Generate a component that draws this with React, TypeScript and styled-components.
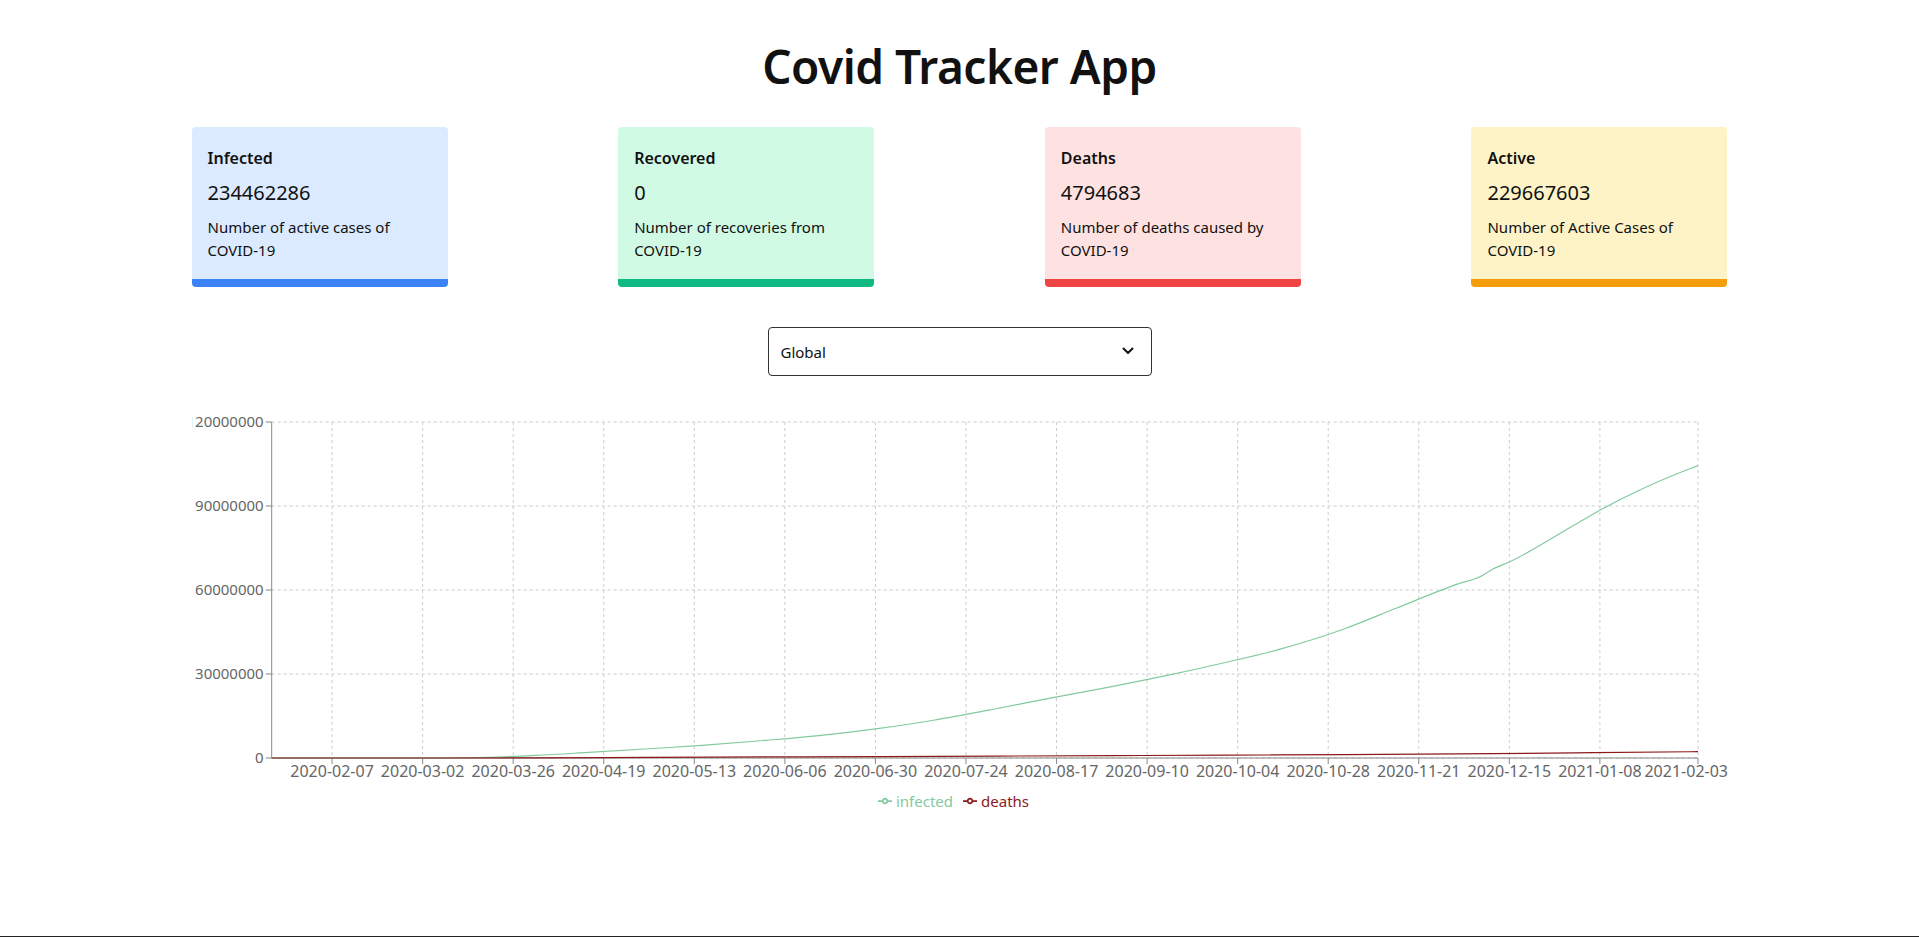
import React from "react"
import styled, { createGlobalStyle } from "styled-components"

const GlobalStyle = createGlobalStyle`
  body {
    margin: 0;
    background: #fff;
    font-family: "Segoe UI", "Noto Sans", sans-serif;
    color: #111;
  }
`

const Page = styled.div`
  max-width: 1536px;
  margin: 0 auto;
  display: flex;
  flex-direction: column;
  align-items: center;
`

const Heading = styled.h1`
  font-size: 46px;
  line-height: 48px;
  font-weight: 600;
  letter-spacing: -0.5px;
  margin: 42px 0 37px;
`

const CardRow = styled.div`
  width: 100%;
  display: flex;
  justify-content: space-between;
`

const Card = styled.div<{ $bg: string; $accent: string }>`
  width: 256px;
  box-sizing: border-box;
  padding: 16px 16px 17px;
  background: ${p => p.$bg};
  border-bottom: 8px solid ${p => p.$accent};
  border-radius: 4px;
`

const CardTitle = styled.div`
  font-size: 16px;
  line-height: 24px;
  font-weight: 600;
  margin: 3px 0 9px;
`

const CardValue = styled.div`
  font-size: 20px;
  line-height: 28px;
  margin-bottom: 9px;
`

const CardText = styled.div`
  font-size: 15px;
  line-height: 23px;
`

const SelectWrap = styled.div`
  position: relative;
  width: 384px;
  margin-top: 40px;
`

const Select = styled.select`
  width: 100%;
  height: 49px;
  appearance: none;
  border: 1px solid #333;
  border-radius: 4px;
  background: #fff;
  padding: 0 12px;
  font-family: inherit;
  font-size: 15px;
  color: #111;
`

const Chevron = styled.svg`
  position: absolute;
  right: 18px;
  top: 20px;
  pointer-events: none;
`

const ChartWrap = styled.div`
  width: 100%;
  margin-top: 41px;
`

const ChartSvg = styled.svg`
  display: block;
  font-family: "Segoe UI", "Noto Sans", sans-serif;
`

const Legend = styled.ul`
  list-style: none;
  margin: 0;
  padding: 0 12px 0 0;
  display: flex;
  justify-content: center;
  font-size: 15px;
  line-height: 16px;
`

const LegendItem = styled.li<{ $color: string }>`
  display: inline-flex;
  align-items: center;
  margin-right: 10px;
  color: ${p => p.$color};

  &:last-child {
    margin-right: 0;
  }

  svg {
    margin-right: 4px;
  }
`

const BottomEdge = styled.div`
  position: fixed;
  left: 0;
  right: 0;
  bottom: 0;
  height: 1px;
  background: #222;
`

const cards = [
  { title: "Infected", value: "234462286", text: "Number of active cases of COVID-19", bg: "#dbeafe", accent: "#3b82f6" },
  { title: "Recovered", value: "0", text: "Number of recoveries from COVID-19", bg: "#d1fae5", accent: "#10b981" },
  { title: "Deaths", value: "4794683", text: "Number of deaths caused by COVID-19", bg: "#fee2e2", accent: "#ef4444" },
  { title: "Active", value: "229667603", text: "Number of Active Cases of COVID-19", bg: "#fef3c7", accent: "#f59e0b" },
]

// chart geometry (svg coords)
const W = 1536
const H = 376
const X0 = 79.7
const X1 = 1506
const Y0 = 5
const Y1 = 341
const DAYS = 378
const MAX = 120000000

const xOf = (d: number) => X0 + (d / DAYS) * (X1 - X0)
const yOf = (v: number) => Y1 - (v / MAX) * (Y1 - Y0)

const infected: [number, number][] = [
  [0, 555], [10, 12000], [39, 88000], [53, 170000], [70, 930000], [84, 2000000],
  [100, 3300000], [114, 4500000], [131, 6300000], [145, 8000000], [161, 10600000],
  [175, 13400000], [192, 17600000], [206, 21300000], [223, 25600000], [237, 29400000],
  [253, 34200000], [267, 38800000], [284, 46000000], [298, 53500000], [314, 62000000],
  [321, 65300000], [323, 67000000], [328, 70000000], [345, 83000000], [352, 88500000],
  [359, 93400000], [376, 103400000], [378, 104400000],
]

const deaths: [number, number][] = [
  [0, 17], [39, 3000], [70, 47000], [100, 234000], [131, 375000], [161, 514000],
  [192, 683000], [223, 857000], [253, 1020000], [284, 1200000], [314, 1470000],
  [345, 1830000], [376, 2230000], [378, 2260000],
]

function slope3(h0: number, h1: number, s0: number, s1: number) {
  const p = (s0 * h1 + s1 * h0) / (h0 + h1)
  return (Math.sign(s0) + Math.sign(s1)) * Math.min(Math.abs(s0), Math.abs(s1), 0.5 * Math.abs(p)) || 0
}

function monotonePath(data: [number, number][]) {
  const pts = data.map(([d, v]) => [xOf(d), yOf(v)])
  const n = pts.length
  const h: number[] = []
  const s: number[] = []
  for (let i = 0; i < n - 1; i++) {
    h.push(pts[i + 1][0] - pts[i][0])
    s.push((pts[i + 1][1] - pts[i][1]) / h[i])
  }
  const t: number[] = new Array(n).fill(0)
  for (let i = 1; i < n - 1; i++) t[i] = slope3(h[i - 1], h[i], s[i - 1], s[i])
  t[0] = (3 * s[0] - t[1]) / 2
  t[n - 1] = (3 * s[n - 2] - t[n - 2]) / 2
  let d = `M${pts[0][0]},${pts[0][1]}`
  for (let i = 0; i < n - 1; i++) {
    const dx = h[i] / 3
    d += `C${pts[i][0] + dx},${pts[i][1] + dx * t[i]},${pts[i + 1][0] - dx},${pts[i + 1][1] - dx * t[i + 1]},${pts[i + 1][0]},${pts[i + 1][1]}`
  }
  return d
}

const dateLabel = (d: number) => {
  const dt = new Date(Date.UTC(2020, 0, 22) + d * 86400000)
  return dt.toISOString().slice(0, 10)
}

const xTicks = [...Array.from({ length: 15 }, (_, i) => 16 + i * 24), DAYS]
const yTicks = [0, 30000000, 60000000, 90000000, 120000000]

const INFECTED = "#82ca9d"
const DEATHS = "#8b1a1a"

const LegendIcon = ({ color }: { color: string }) => (
  <svg width="14" height="14" viewBox="0 0 32 32">
    <path
      strokeWidth="4"
      fill="none"
      stroke={color}
      d="M0,16h10.67A5.33,5.33,0,1,1,21.33,16H32M21.33,16A5.33,5.33,0,1,1,10.67,16"
    />
  </svg>
)

const Chart = () => (
  <ChartWrap>
    <ChartSvg width={W} height={H}>
      <g stroke="#ccc" strokeDasharray="3 3">
        {yTicks.map(v => (
          <line key={v} x1={X0} x2={X1} y1={yOf(v)} y2={yOf(v)} />
        ))}
        {xTicks.map(d => (
          <line key={d} x1={xOf(d)} x2={xOf(d)} y1={Y0} y2={Y1} />
        ))}
      </g>
      <g stroke="#888">
        <line x1={X0} x2={X0} y1={Y0} y2={Y1} />
        <line x1={X0} x2={X1} y1={Y1} y2={Y1} />
        {yTicks.map(v => (
          <line key={v} x1={X0 - 6} x2={X0} y1={yOf(v)} y2={yOf(v)} />
        ))}
        {xTicks.map(d => (
          <line key={d} x1={xOf(d)} x2={xOf(d)} y1={Y1} y2={Y1 + 6} />
        ))}
      </g>
      <g fill="#666" fontSize="15">
        {yTicks.map(v => (
          <text key={v} x={X0 - 8} y={yOf(v)} dy="0.355em" textAnchor="end">
            {v}
          </text>
        ))}
      </g>
      <g fill="#666" fontSize="16">
        {xTicks.map(d => (
          <text
            key={d}
            x={d === DAYS ? W : xOf(d)}
            y={Y1 + 8}
            dy="0.71em"
            textAnchor={d === DAYS ? "end" : "middle"}
          >
            {dateLabel(d)}
          </text>
        ))}
      </g>
      <path d={monotonePath(infected)} fill="none" stroke={INFECTED} strokeWidth="1.2" />
      <path d={monotonePath(deaths)} fill="none" stroke={DEATHS} strokeWidth="1.2" />
    </ChartSvg>
    <Legend>
      <LegendItem $color={INFECTED}>
        <LegendIcon color={INFECTED} />
        infected
      </LegendItem>
      <LegendItem $color={DEATHS}>
        <LegendIcon color={DEATHS} />
        deaths
      </LegendItem>
    </Legend>
  </ChartWrap>
)

export default function App() {
  return (
    <>
      <GlobalStyle />
      <Page>
        <Heading>Covid Tracker App</Heading>
        <CardRow>
          {cards.map(c => (
            <Card key={c.title} $bg={c.bg} $accent={c.accent}>
              <CardTitle>{c.title}</CardTitle>
              <CardValue>{c.value}</CardValue>
              <CardText>{c.text}</CardText>
            </Card>
          ))}
        </CardRow>
        <SelectWrap>
          <Select defaultValue="global">
            <option value="global">Global</option>
          </Select>
          <Chevron width="12" height="8" viewBox="0 0 12 8">
            <path d="M1.5 1.5 6 6l4.5-4.5" fill="none" stroke="#111" strokeWidth="2" strokeLinecap="round" strokeLinejoin="round" />
          </Chevron>
        </SelectWrap>
        <Chart />
      </Page>
      <BottomEdge />
    </>
  )
}
